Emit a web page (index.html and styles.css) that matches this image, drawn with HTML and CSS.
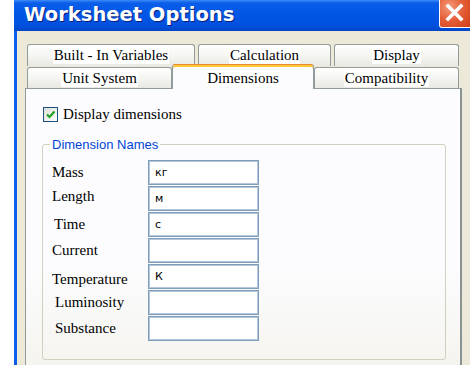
FILE: index.html
```html
<!DOCTYPE html>
<html>
<head>
    <meta charset="utf-8">
    <title>Worksheet Options</title>
    <link rel="stylesheet" href="styles.css">
</head>
<body>
    <div class="window">
        <div class="titlebar">
            <span class="title">Worksheet Options</span>
            <div class="close_btn">
                <svg width="33" height="28" viewBox="0 0 33 28">
                    <path d="M9 7 L22 20 M22 7 L9 20" stroke="#fff" stroke-width="3.6" stroke-linecap="square" fill="none"/>
                </svg>
            </div>
        </div>

        <div class="window_body">
            <div class="tabs">
                <div class="tab_row">
                    <div class="tab tab_builtin"><span>Built - In Variables</span></div>
                    <div class="tab tab_calc"><span>Calculation</span></div>
                    <div class="tab tab_display"><span>Display</span></div>
                </div>
                <div class="tab_row tab_row2">
                    <div class="tab tab_units"><span>Unit System</span></div>
                    <div class="tab tab_dims selected"><span>Dimensions</span></div>
                    <div class="tab tab_compat"><span>Compatibility</span></div>
                </div>
            </div>

            <div class="panel">
                <div class="check_line">
                    <span class="checkbox">
                        <svg width="13" height="13" viewBox="0 0 13 13">
                            <path d="M3 6.5 L5.5 9 L10.5 3.5" stroke="#21a121" stroke-width="2.2" fill="none"/>
                        </svg>
                    </span>
                    <span class="check_text">Display dimensions</span>
                </div>

                <fieldset class="group">
                    <legend>Dimension Names</legend>
                    <div class="dim_row"><span class="dim_label">Mass</span><div class="dim_input">кг</div></div>
                    <div class="dim_row"><span class="dim_label up">Length</span><div class="dim_input">м</div></div>
                    <div class="dim_row"><span class="dim_label indent2">Time</span><div class="dim_input">с</div></div>
                    <div class="dim_row"><span class="dim_label">Current</span><div class="dim_input"></div></div>
                    <div class="dim_row"><span class="dim_label down">Temperature</span><div class="dim_input">К</div></div>
                    <div class="dim_row"><span class="dim_label indent4">Luminosity</span><div class="dim_input"></div></div>
                    <div class="dim_row"><span class="dim_label indent4">Substance</span><div class="dim_input"></div></div>
                </fieldset>
            </div>
        </div>
    </div>
</body>
</html>
```

FILE: styles.css
```css
body {
    margin: 0;
    background-color: #fff;
    overflow: hidden;
}

.window {
    margin-left: 14px;
    width: 460px;
    height: 365px;
    display: flex;
    flex-direction: column;
    background-color: #ece9d8;
}

/* title bar */
.titlebar {
    height: 31px;
    flex-shrink: 0;
    display: flex;
    justify-content: space-between;
    align-items: flex-start;
    background: linear-gradient(#3d8af7 0, #0a5ee9 3px, #0055e5 50%, #0050dc 85%, #0046c4 100%);
}
.title {
    padding: 3px 0 0 10px;
    font-family: "DejaVu Sans", sans-serif;
    font-weight: bold;
    font-size: 19.5px;
    color: #fff;
    text-shadow: 1px 1px 0 #0b1e78;
}
.close_btn {
    width: 33px;
    height: 28px;
    margin-right: 2px;
    box-sizing: border-box;
    border: 1px solid #fff;
    border-top: none;
    border-radius: 0 0 3px 3px;
    background: radial-gradient(circle at 30% 25%, #f49a78 0, #e5603a 45%, #cf3a12 100%);
}
.close_btn svg {
    display: block;
    margin: -1px 0 0 -1px;
}

/* body */
.window_body {
    flex: 1;
    display: flex;
    flex-direction: column;
    padding: 13px 0 0 8px;
    border-left: 3px solid #0a5ee9;
}

.tabs {
    margin-left: 2px;
    font-family: "Liberation Serif", "DejaVu Serif", serif;
    font-size: 15px;
}
.tab_row {
    display: flex;
    height: 22px;
}
.tab_row2 {
    align-items: flex-end;
}
.tab {
    box-sizing: border-box;
    height: 22px;
    margin-right: 3px;
    display: flex;
    justify-content: center;
    align-items: center;
    border: 1px solid #919b9c;
    border-bottom: none;
    border-radius: 3px 3px 0 0;
    background: linear-gradient(#ffffff, #f3f3ef 60%, #e9e8e1);
}
.tab span {
    background-color: #fff;
    padding: 0 1px;
    line-height: 17px;
}
.tab_builtin { width: 168px; }
.tab_calc { width: 133px; }
.tab_display { width: 125px; margin-right: 0; }

.tab_row2 .tab {
    height: 21px;
    margin-right: 0;
    padding-top: 1px;
}
.tab_units { width: 145px; }
.tab_compat { width: 145px; }
.tab_row2 .tab.selected {
    width: 142px;
    height: 25px;
    margin-bottom: -1px;
    padding-top: 2px;
    position: relative;
    z-index: 1;
    background: #fcfcfe;
    border-top: 1px solid #e68b2c;
    box-shadow: inset 0 2px 0 #ffc83c;
}

.panel {
    flex: 1;
    width: 437px;
    box-sizing: border-box;
    padding: 18px 0 0 17px;
    border: 1px solid #919b9c;
    border-right: 2px solid #8a9394;
    border-bottom: none;
    background: linear-gradient(#fcfcfe 0, #fcfcfe 65%, #f5f4ef 100%);
}

.check_line {
    display: flex;
    align-items: center;
    height: 15px;
    font-family: "Liberation Serif", "DejaVu Serif", serif;
    font-size: 15px;
}
.checkbox {
    width: 15px;
    height: 15px;
    box-sizing: border-box;
    border: 1px solid #1c5180;
    background: linear-gradient(135deg, #dcdcd7, #fff);
}
.checkbox svg {
    display: block;
}
.check_text {
    margin-left: 5px;
}

/* dimension names group */
.group {
    width: 404px;
    box-sizing: border-box;
    margin: 15px 0 0 -1px;
    padding: 0 0 18px 7px;
    border: 1px solid #d0d0bf;
    border-radius: 3px;
}
.group legend {
    padding: 0 2px;
    font-family: "Liberation Sans", sans-serif;
    font-size: 13px;
    color: #0046d5;
}

.dim_row {
    display: flex;
    align-items: center;
    height: 25px;
    margin-top: 1px;
}
.dim_row:first-of-type {
    margin-top: 8px;
}
.dim_label {
    width: 96px;
    padding-left: 2px;
    font-family: "Liberation Serif", "DejaVu Serif", serif;
    font-size: 15px;
}
.dim_label.up { margin-top: -4px; }
.dim_label.down { margin-top: 6px; }
.dim_label.indent2 { width: 94px; padding-left: 4px; }
.dim_label.indent4 { width: 93px; padding-left: 5px; }

.dim_input {
    width: 111px;
    height: 25px;
    box-sizing: border-box;
    padding: 0 0 0 6px;
    border: 1px solid #7f9db9;
    box-shadow: inset 0 0 0 1px #b4c6dc;
    background-color: #fff;
    font-family: "DejaVu Sans", sans-serif;
    font-size: 11px;
    line-height: 23px;
}
```
